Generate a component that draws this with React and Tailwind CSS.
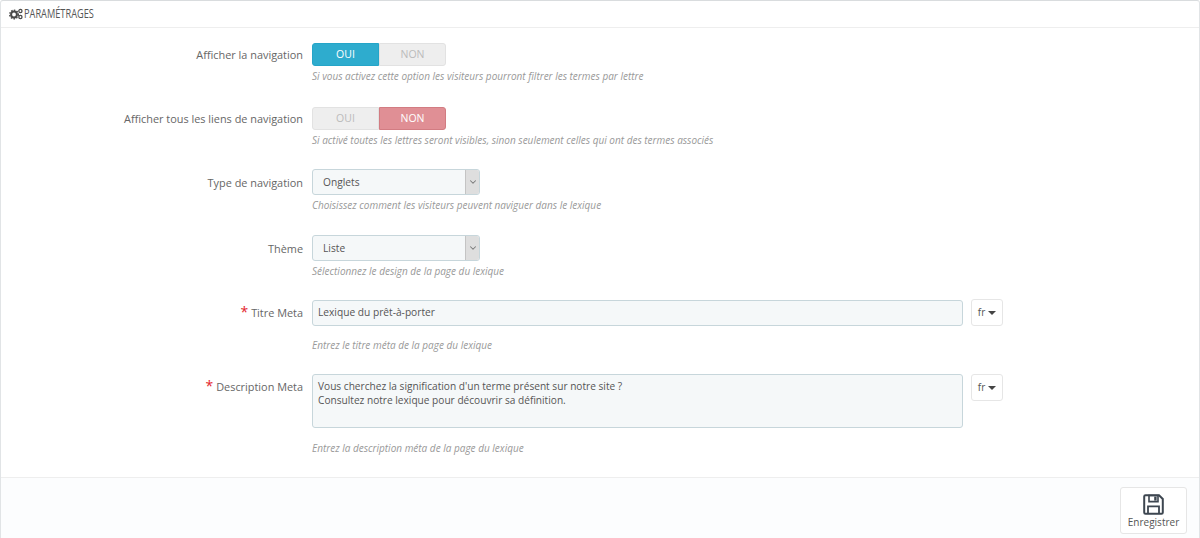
import React from 'react';
import { ChevronDown } from 'lucide-react';

const Help = ({ children, className = '' }) => (
  <p className={`ml-[311px] text-[10px] italic leading-[14px] text-[#999] ${className}`}>{children}</p>
);

const Label = ({ children, required, className = '' }) => (
  <label className={`block w-[303px] shrink-0 pr-px text-right text-[10.9px] leading-[18px] text-[#666] ${className}`}>
    {required && <span className="mr-[3px] text-[14px] leading-[14px] text-[#e3252b]">*</span>}
    {children}
  </label>
);

const Toggle = ({ on }) => (
  <div className="flex h-[23px] w-[134px] text-[10.5px]">
    <div className={on
      ? 'flex w-[67px] items-center justify-center rounded-l-[3px] border border-[#25a5c8] bg-[#2eacce] text-white'
      : 'flex w-[67px] items-center justify-center rounded-l-[3px] border border-[#e2e2e2] bg-[#eeeeee] text-[#bbb]'}>OUI</div>
    <div className={on
      ? 'flex w-[67px] items-center justify-center rounded-r-[3px] border border-[#e2e2e2] bg-[#eeeeee] text-[#bbb]'
      : 'flex w-[67px] items-center justify-center rounded-r-[3px] border border-[#d27c82] bg-[#e08f95] text-white'}>NON</div>
  </div>
);

const Select = ({ value }) => (
  <div className="flex h-[26px] w-[168px] items-center justify-between rounded-[3px] border border-[#c7d6db] bg-[#f5f8f9] pl-[10px] text-[10.2px] text-[#555]">
    <span className="pt-px">{value}</span>
    <span className="flex h-full w-[14px] items-center justify-center rounded-r-[2px] border-l border-[#c4c4c4] bg-[#dedede]">
      <ChevronDown size={10} strokeWidth={2.5} className="text-[#777]" />
    </span>
  </div>
);

const LangButton = () => (
  <button className="flex h-[27px] w-[32px] items-center justify-center gap-[3px] rounded-[3px] border border-[#e6e6e6] bg-white text-[10px] text-[#555]">
    fr
    <span className="h-0 w-0 border-x-[4px] border-t-[4px] border-x-transparent border-t-[#444]" />
  </button>
);

const GearsIcon = () => (
  <svg width="14" height="12" viewBox="0 0 14 12" className="text-[#4a4a4a]">
    <circle cx="5" cy="6.5" r="2.9" fill="none" stroke="currentColor" strokeWidth="2" />
    <circle cx="5" cy="6.5" r="4.3" fill="none" stroke="currentColor" strokeWidth="1.4" strokeDasharray="1.5 1.3" />
    <circle cx="11.4" cy="3" r="1.6" fill="none" stroke="currentColor" strokeWidth="1.3" />
    <circle cx="11.4" cy="9" r="1.6" fill="none" stroke="currentColor" strokeWidth="1.3" />
  </svg>
);

const SaveIcon = () => (
  <svg width="21" height="21" viewBox="0 0 21 21" className="text-[#3d4650]">
    <path d="M2.5 1.2H16L19.8 5V18.5Q19.8 19.8 18.5 19.8H2.5Q1.2 19.8 1.2 18.5V2.5Q1.2 1.2 2.5 1.2Z" fill="none" stroke="currentColor" strokeWidth="2" />
    <path d="M6 1.5H15V7.6H6Z" fill="none" stroke="currentColor" strokeWidth="1.6" />
    <rect x="11.2" y="2.6" width="2.4" height="4" fill="currentColor" />
    <path d="M5 19.5V12.4H16V19.5" fill="none" stroke="currentColor" strokeWidth="1.8" />
  </svg>
);

export default function App() {
  return (
    <div className="h-[538px] w-[1200px] overflow-hidden bg-white" style={{ fontFamily: '"Open Sans", sans-serif' }}>
      <div className="flex h-full flex-col rounded-t-[3px] border border-b-0 border-[#e1e4e6] border-t-[#d9dcde]">
        <div className="flex h-[27px] shrink-0 items-center gap-px border-b border-[#eeeeee] pl-[8px]">
          <GearsIcon />
          <h3 className="origin-left scale-x-[0.71] text-[13px] font-normal whitespace-nowrap text-[#555]">PARAMÉTRAGES</h3>
        </div>

        <div className="flex-1 pt-[15px]">
          <div className="flex items-center gap-2">
            <Label>Afficher la navigation</Label>
            <Toggle on />
          </div>
          <Help className="mt-[3px]">Si vous activez cette option les visiteurs pourront filtrer les termes par lettre</Help>

          <div className="mt-[24px] flex items-center gap-2">
            <Label>Afficher tous les liens de navigation</Label>
            <Toggle />
          </div>
          <Help className="mt-[3px]">Si activé toutes les lettres seront visibles, sinon seulement celles qui ont des termes associés</Help>

          <div className="mt-[22px] flex items-center gap-2">
            <Label className="pt-px">Type de navigation</Label>
            <Select value="Onglets" />
          </div>
          <Help className="mt-[3px]">Choisissez comment les visiteurs peuvent naviguer dans le lexique</Help>

          <div className="mt-[23px] flex items-center gap-2">
            <Label className="pt-px">Thème</Label>
            <Select value="Liste" />
          </div>
          <Help className="mt-[3px]">Sélectionnez le design de la page du lexique</Help>

          <div className="mt-[21px] flex items-center gap-2">
            <Label required className="pt-px">Titre Meta</Label>
            <div className="flex h-[26px] w-[651px] items-center rounded-[3px] border border-[#c7d6db] bg-[#f5f8f9] px-[5px] pt-px text-[10.2px] text-[#555]">Lexique du prêt-à-porter</div>
            <LangButton />
          </div>
          <Help className="mt-[12px]">Entrez le titre méta de la page du lexique</Help>

          <div className="mt-[22px] flex items-start gap-2">
            <Label required className="pt-[4px]">Description Meta</Label>
            <div className="h-[54px] w-[651px] rounded-[3px] border border-[#c7d6db] bg-[#f5f8f9] px-[5px] pt-[4px] text-[10.15px] leading-[14px] text-[#555]">
              Vous cherchez la signification d'un terme présent sur notre site ?<br />
              Consultez notre lexique pour découvrir sa définition.
            </div>
            <LangButton />
          </div>
          <Help className="mt-[13px]">Entrez la description méta de la page du lexique</Help>
        </div>

        <div className="flex h-[61px] shrink-0 justify-end border-t border-[#eeeeee] bg-[#fcfdfe] pt-[9px] pr-[12px]">
          <button className="flex h-[47px] w-[67px] flex-col items-center gap-[1px] rounded-[3px] border border-[#e6e6e6] bg-white pt-[6px] text-[10px] leading-[13px] text-[#555]">
            <SaveIcon />
            Enregistrer
          </button>
        </div>
      </div>
    </div>
  );
}
